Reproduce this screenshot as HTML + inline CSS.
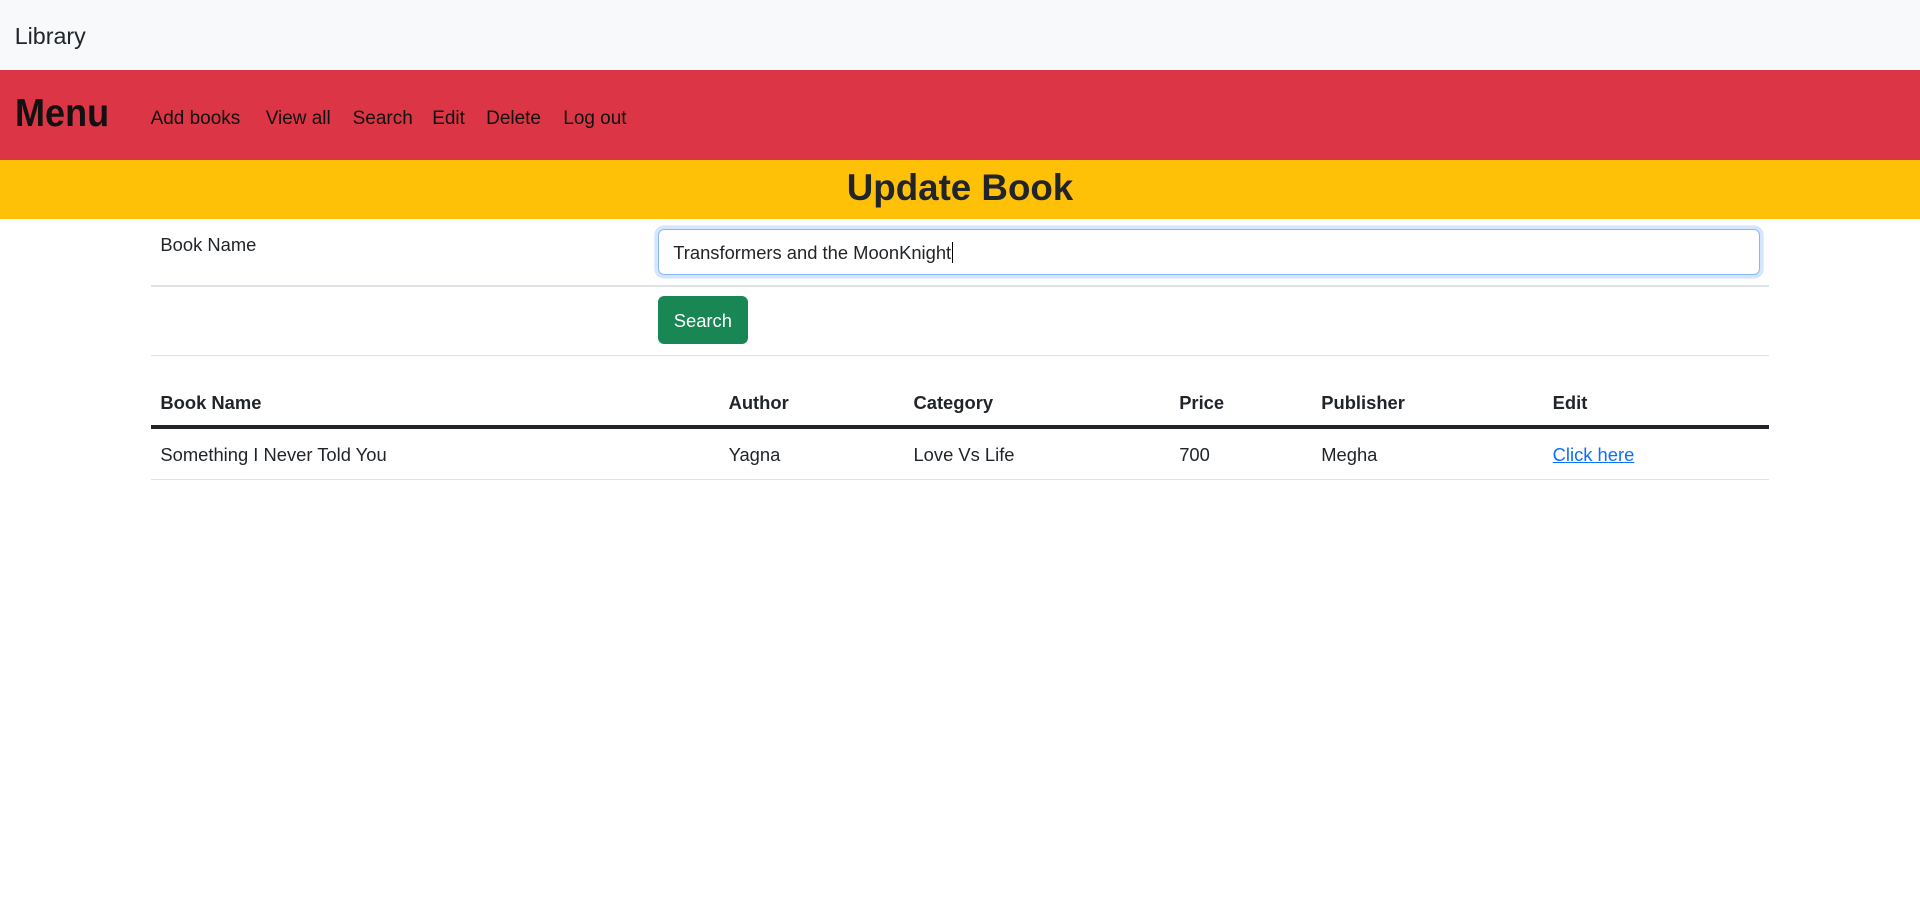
<!DOCTYPE html>
<html><head><meta charset="utf-8"><style>
*{box-sizing:border-box;margin:0;padding:0}
html,body{width:1920px;height:898px;overflow:hidden;background:#fff}
#z{zoom:1.2245;width:1568px;font-family:"Liberation Sans",sans-serif;color:#212529;font-size:15px}
.top{height:57px;background:#f8f9fa;position:relative}
.top span{position:absolute;left:12px;top:19px;font-size:19px}
.red{height:74px;background:#dc3545;position:relative}
.red .m{position:absolute;left:12px;top:18px;font-size:32px;font-weight:bold;color:#111;transform:scaleX(0.92);transform-origin:left}
.red .l{position:absolute;top:31px;font-size:15.5px;color:#111}
.yel{height:48px;background:#ffc107;text-align:center;font-size:30px;font-weight:bold;line-height:46px}
.abs{position:absolute}
.line{position:absolute;left:123px;width:1322px;height:1px;background:#dee2e6}
</style></head><body><div id="z">
<div class="top"><span>Library</span></div>
<div class="red"><span class="m">Menu</span>
<span class="l" style="left:123px">Add books</span>
<span class="l" style="left:217px">View all</span>
<span class="l" style="left:288px">Search</span>
<span class="l" style="left:353px">Edit</span>
<span class="l" style="left:397px">Delete</span>
<span class="l" style="left:460px">Log out</span></div>
<div class="yel">Update Book</div>
<div class="abs" style="left:131px;top:191px">Book Name</div>
<div class="abs" style="left:537px;top:187px;width:900px;height:38px;border:1px solid #86b7fe;border-radius:5px;box-shadow:0 0 0 3px rgba(13,110,253,.18);padding:10px 12px">Transformers and the MoonKnight<span style="border-left:1px solid #000;margin-left:1px"></span></div>
<div class="line" style="top:233px"></div>
<div class="abs" style="left:537px;top:242px;width:74px;height:39px;background:#198754;color:#fff;border-radius:5px;text-align:center;line-height:41px">Search</div>
<div class="line" style="top:290px"></div>
<div style="font-weight:bold">
<div class="abs" style="left:131px;top:320px">Book Name</div>
<div class="abs" style="left:595px;top:320px">Author</div>
<div class="abs" style="left:746px;top:320px">Category</div>
<div class="abs" style="left:963px;top:320px">Price</div>
<div class="abs" style="left:1079px;top:320px">Publisher</div>
<div class="abs" style="left:1268px;top:320px">Edit</div></div>
<div class="line" style="top:347px;height:3px;background:#212529"></div>
<div class="abs" style="left:131px;top:363px">Something I Never Told You</div>
<div class="abs" style="left:595px;top:363px">Yagna</div>
<div class="abs" style="left:746px;top:363px">Love Vs Life</div>
<div class="abs" style="left:963px;top:363px">700</div>
<div class="abs" style="left:1079px;top:363px">Megha</div>
<div class="abs" style="left:1268px;top:363px;color:#0d6efd;text-decoration:underline">Click here</div>
<div class="line" style="top:391px"></div>
</div></body></html>
